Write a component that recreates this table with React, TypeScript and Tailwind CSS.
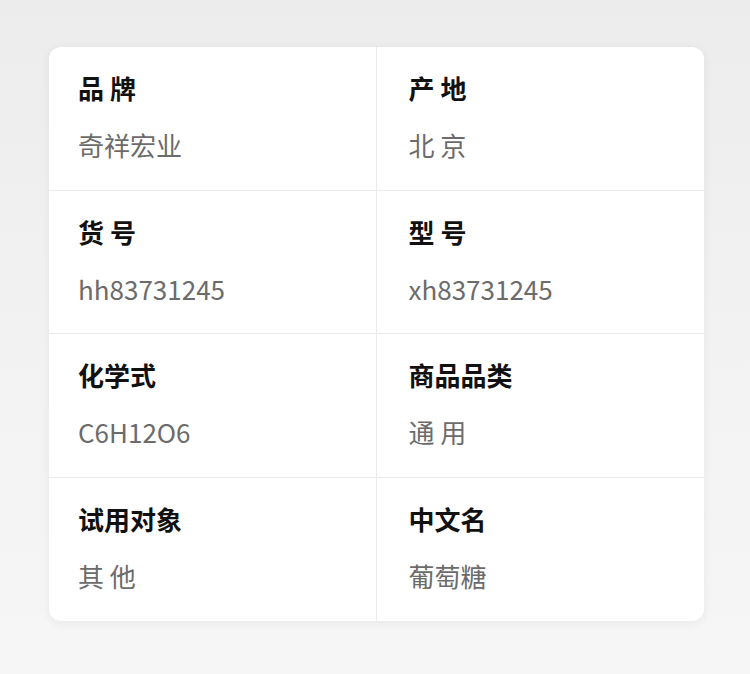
const items = [
  { label: "品 牌", value: "奇祥宏业" },
  { label: "产 地", value: "北 京" },
  { label: "货 号", value: "hh83731245" },
  { label: "型 号", value: "xh83731245" },
  { label: "化学式", value: "C6H12O6" },
  { label: "商品品类", value: "通 用" },
  { label: "试用对象", value: "其 他" },
  { label: "中文名", value: "葡萄糖" },
];

export default function App() {
  return (
    <div
      className="min-h-[674px] w-[750px] bg-gradient-to-b from-[#ececec] via-[#f2f2f2] to-[#f6f6f6] pt-[47px] pl-[49px]"
      style={{ fontFamily: '"Noto Sans CJK SC", "Noto Sans", sans-serif' }}
    >
      <div className="w-[655px] overflow-hidden rounded-[12px] bg-white shadow-[0_2px_10px_rgba(0,0,0,0.06)]">
        <div className="grid grid-cols-2">
          {items.map((item, i) => (
            <div
              key={i}
              className={`h-[143.5px] pt-[26px] ${i % 2 === 0 ? "border-r border-[#ebebeb] pl-[29px]" : "pl-[32px]"} ${
                i < items.length - 2 ? "border-b border-[#ebebeb]" : ""
              }`}
            >
              <p className="text-[26px] font-bold leading-[30px] text-[#111]">{item.label}</p>
              <p className="mt-[27px] text-[26px] leading-[30px] text-[#6b6b6b]">{item.value}</p>
            </div>
          ))}
        </div>
      </div>
    </div>
  );
}
